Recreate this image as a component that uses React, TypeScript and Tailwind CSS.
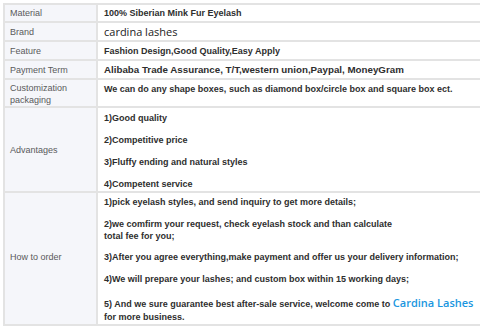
import React from "react";

const L = "bg-[#f5f6fa] border-r-2 border-[#e3e3e3] pl-[5px] pr-[4px] text-[#5a5a5a] flex items-center";
const R = "px-[6px] text-[#2e2e2e] font-bold";

export default function App() {
  return (
    <div className="w-[480px] h-[327px] bg-white pt-[3px] pl-[3px] overflow-hidden" style={{ fontFamily: '"Liberation Sans", Arial, sans-serif' }}>
      <div className="w-[477px] border-2 border-r-0 border-[#e3e3e3] text-[9px] leading-[12px]">
        <div className="grid grid-cols-[93px_1fr] border-b-2 border-[#e3e3e3] h-[18px]">
          <div className={L}>Material</div>
          <div className={R + " flex items-center"}>100% Siberian Mink Fur Eyelash</div>
        </div>
        <div className="grid grid-cols-[93px_1fr] border-b-2 border-[#e3e3e3] h-[19px]">
          <div className={L}>Brand</div>
          <div className="px-[6px] flex items-center text-[11px] text-[#222]" style={{ fontFamily: '"Open Sans", sans-serif' }}>cardina lashes</div>
        </div>
        <div className="grid grid-cols-[93px_1fr] border-b-2 border-[#e3e3e3] h-[19px]">
          <div className={L}>Feature</div>
          <div className={R + " flex items-center"}>Fashion Design,Good Quality,Easy Apply</div>
        </div>
        <div className="grid grid-cols-[93px_1fr] border-b-2 border-[#e3e3e3] h-[19px]">
          <div className={L}>Payment Term</div>
          <div className={R + " flex items-center text-[9.75px]"}>Alibaba Trade Assurance, T/T,western union,Paypal, MoneyGram</div>
        </div>
        <div className="grid grid-cols-[93px_1fr] border-b-2 border-[#e3e3e3] h-[28px]">
          <div className={L + " pt-[2px]"}>Customization<br />packaging</div>
          <div className={R + " pt-[3px]"}>We can do any shape boxes, such as diamond box/circle box and square box ect.</div>
        </div>
        <div className="grid grid-cols-[93px_1fr] border-b-2 border-[#e3e3e3] h-[85px]">
          <div className={L}>Advantages</div>
          <div className={R + " pt-[4px] flex flex-col gap-[10px]"}>
            <p>1)Good quality</p>
            <p>2)Competitive price</p>
            <p>3)Fluffy ending and natural styles</p>
            <p>4)Competent service</p>
          </div>
        </div>
        <div className="grid grid-cols-[93px_1fr] h-[131px]">
          <div className={L + " pb-[4px]"}>How to order</div>
          <div className={R + " pt-[3px]"}>
            <p>1)pick eyelash styles, and send inquiry to get more details;</p>
            <p className="mt-[10px]">2)we comfirm your request, check eyelash stock and than calculate<br />total fee for you;</p>
            <p className="mt-[9px]">3)After you agree everything,make payment and offer us your delivery information;</p>
            <p className="mt-[10px]">4)We will prepare your lashes; and custom box within 15 working days;</p>
            <p className="mt-[9px] leading-[18px] whitespace-nowrap">5) And we sure guarantee best after-sale service, welcome come to{" "}
              <span className="text-[11px] font-semibold text-[#1a96e0]" style={{ fontFamily: '"Open Sans", sans-serif' }}>Cardina Lashes</span>
            </p>
            <p className="-mt-[2px]">for more business.</p>
          </div>
        </div>
      </div>
    </div>
  );
}
